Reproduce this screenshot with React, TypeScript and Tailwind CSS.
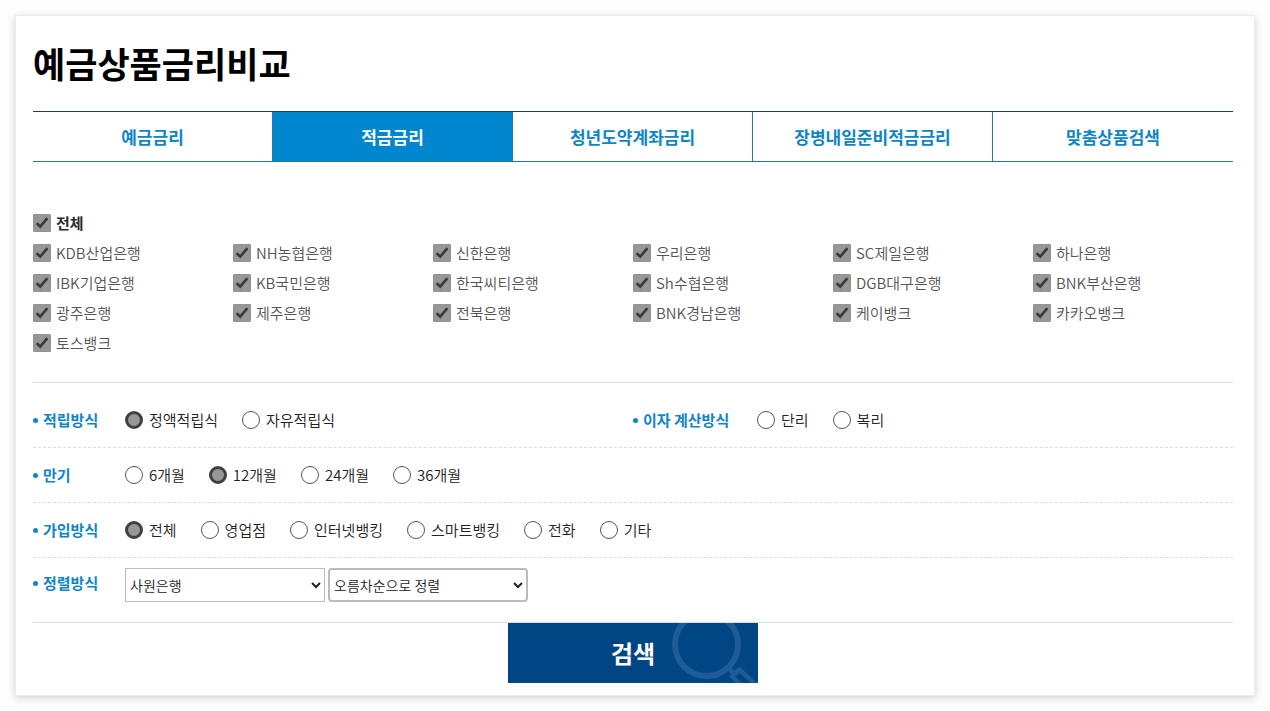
import { useState } from "react";

const tabs = ["예금금리", "적금금리", "청년도약계좌금리", "장병내일준비적금금리", "맞춤상품검색"];

const banks = [
  "KDB산업은행", "NH농협은행", "신한은행", "우리은행", "SC제일은행", "하나은행",
  "IBK기업은행", "KB국민은행", "한국씨티은행", "Sh수협은행", "DGB대구은행", "BNK부산은행",
  "광주은행", "제주은행", "전북은행", "BNK경남은행", "케이뱅크", "카카오뱅크",
  "토스뱅크",
];

function Check({ label, checked, onChange, strong = false }: {
  label: string;
  checked: boolean;
  onChange: () => void;
  strong?: boolean;
}) {
  return (
    <label className="flex h-[30px] items-center gap-[5px]">
      <span className="grid size-[18px] shrink-0">
        <input
          type="checkbox"
          checked={checked}
          onChange={onChange}
          className="peer size-[18px] appearance-none rounded-[1px] border border-[#8c8c8c] bg-white [grid-area:1/1] checked:border-[#929292] checked:bg-[#979797]"
        />
        <svg viewBox="0 0 18 18" className="pointer-events-none invisible size-[18px] [grid-area:1/1] peer-checked:visible" aria-hidden="true">
          <path d="M3.6 9.2 7.2 12.600 14.400 4.200" fill="none" stroke="#3b3b3b" strokeWidth="2.7" />
        </svg>
      </span>
      <span className={strong ? "text-[15px] font-bold text-[#2a2a2a]" : "text-[15px] font-[350] text-[#555]"}>{label}</span>
    </label>
  );
}

function RadioGroup({ name, legend, options, initial, wide = false }: {
  name: string;
  legend: string;
  options: string[];
  initial?: string;
  wide?: boolean;
}) {
  return (
    <div role="radiogroup" aria-labelledby={name} className="flex flex-1 items-center">
      <FieldTitle id={name} wide={wide}>{legend}</FieldTitle>
      <div className="flex items-center gap-6">
        {options.map((o) => (
          <label key={o} className="flex items-center gap-[6px] text-[15px] font-[350] text-[#222]">
            <input
              type="radio"
              name={name}
              defaultChecked={o === initial}
              className="size-[18px] shrink-0 appearance-none rounded-full border border-[#555] bg-white checked:border-[3px] checked:border-[#404040] checked:bg-[#979797]"
            />
            {o}
          </label>
        ))}
      </div>
    </div>
  );
}

function FieldTitle({ id, wide = false, children }: { id: string; wide?: boolean; children: string }) {
  return (
    <div id={id} className={`flex shrink-0 items-center gap-[5px] text-[15px] font-bold text-[#0f85c6] ${wide ? "w-[124px]" : "w-[92px]"}`}>
      <span className="size-[5px] rounded-full bg-[#0f85c6]" />
      {children}
    </div>
  );
}

export default function App() {
  const [active, setActive] = useState(1);
  const [selected, setSelected] = useState(banks);
  const all = selected.length === banks.length;
  const toggle = (b: string) =>
    setSelected((s) => (s.includes(b) ? s.filter((x) => x !== b) : [...s, b]));

  return (
    <div className="min-h-screen bg-[#fefefe] p-[15px] font-['Noto_Sans_CJK_KR',sans-serif]">
      <main className="border border-[#ececec] bg-white pt-[23px] pr-[21px] pb-3 pl-[17px] shadow-[0_2px_8px_rgba(0,0,0,0.18)]">
        <h1 className="text-[35px] leading-12 font-bold text-black">예금상품금리비교</h1>

        <nav className="mt-6 grid h-[51px] grid-cols-5 border-t border-b border-t-[#1a4060] border-b-[#1c7dab]">
          {tabs.map((t, i) => (
            <a
              key={t}
              href="#"
              onClick={(e) => { e.preventDefault(); setActive(i); }}
              className={`flex items-center justify-center border-[#1c7dab] text-[17px] font-bold ${i === active ? "bg-[#0085cf] text-white" : "text-[#0f85c6]"} ${i < tabs.length - 1 ? "border-r" : ""}`}
            >
              {t}
            </a>
          ))}
        </nav>

        <form onSubmit={(e) => e.preventDefault()}>
          <div className="border-b border-[#ddd] pt-[46px] pb-[24px]">
            <Check label="전체" strong checked={all} onChange={() => setSelected(all ? [] : banks)} />
            <div className="grid grid-cols-6">
              {banks.map((b) => (
                <Check key={b} label={b} checked={selected.includes(b)} onChange={() => toggle(b)} />
              ))}
            </div>
          </div>

          <div className="flex h-[65px] border-b border-dashed border-[#ddd] pt-[10px]">
            <RadioGroup name="saving" legend="적립방식" options={["정액적립식", "자유적립식"]} initial="정액적립식" />
            <RadioGroup name="interest" legend="이자 계산방식" options={["단리", "복리"]} wide />
          </div>
          <div className="flex h-[55px] border-b border-dashed border-[#ddd]">
            <RadioGroup name="term" legend="만기" options={["6개월", "12개월", "24개월", "36개월"]} initial="12개월" />
          </div>
          <div className="flex h-[55px] border-b border-dashed border-[#ddd]">
            <RadioGroup name="channel" legend="가입방식" options={["전체", "영업점", "인터넷뱅킹", "스마트뱅킹", "전화", "기타"]} initial="전체" />
          </div>
          <div className="flex h-[65px] items-start border-b border-[#ddd] pt-[10px]">
            <div className="flex h-[30px] items-center">
              <FieldTitle id="sort">정렬방식</FieldTitle>
            </div>
            <div className="flex gap-[3px] text-[14px] font-[350] text-[#222]">
              <select aria-labelledby="sort" className="h-[34px] w-[200px] border border-[#bbb] bg-white">
                <option>사원은행</option>
                <option>세전이자율</option>
              </select>
              <select aria-labelledby="sort" className="h-[34px] w-[200px] rounded-[4px] border-2 border-[#bbb] bg-white">
                <option>오름차순으로 정렬</option>
                <option>내림차순으로 정렬</option>
              </select>
            </div>
          </div>

          <button type="submit" className="relative mx-auto block h-[60px] w-[250px] overflow-hidden bg-[#004685] text-[24px] font-bold text-white">
            <svg viewBox="1 0 90 60" className="absolute top-0 right-0 h-[60px] w-[90px]" fill="none" stroke="#1f5c95" aria-hidden="true">
              <circle cx="39.5" cy="21.5" r="31.5" strokeWidth="6" />
              <path d="M60.500 44 67 50.500" strokeWidth="5" />
              <path d="M77 65 65 53.500 72.500 46.500 92 65" strokeWidth="4.500" strokeLinejoin="round" />
            </svg>
            <span className="relative">검색</span>
          </button>
        </form>
      </main>
    </div>
  );
}
